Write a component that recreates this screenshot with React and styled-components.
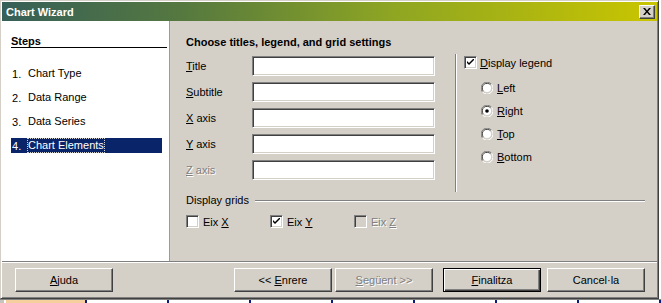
import React from "react";
import styled, { createGlobalStyle, css } from "styled-components";

const GlobalStyle = createGlobalStyle`
  html, body {
    margin: 0;
    padding: 0;
    background: #ffffff;
    overflow: hidden;
  }
  body {
    font-family: "Liberation Sans", Arial, sans-serif;
    font-size: 11px;
    color: #000;
  }
`;

const steps = ["Chart Type", "Data Range", "Data Series", "Chart Elements"];

const fields = [
  { key: "T", rest: "itle" },
  { key: "S", rest: "ubtitle" },
  { key: "X", rest: " axis" },
  { key: "Y", rest: " axis" },
  { key: "Z", rest: " axis", disabled: true },
];

const positions = [
  { key: "L", rest: "eft" },
  { key: "R", rest: "ight", checked: true },
  { key: "T", rest: "op" },
  { key: "B", rest: "ottom" },
];

const grids = [
  { label: "X" },
  { label: "Y", checked: true },
  { label: "Z", disabled: true },
];

const CheckMark = () => (
  <svg width="7" height="7" viewBox="0 0 7 7">
    <path d="M0 2 L0 4 L2 6 L7 1 L7 -1 L2 4 Z" fill="#000" />
  </svg>
);

const CloseGlyph = () => (
  <svg width="8" height="7" viewBox="0 0 8 7">
    <path d="M0 0 H2 L4 2.5 L6 0 H8 L5 3.5 L8 7 H6 L4 4.5 L2 7 H0 L3 3.5 Z" fill="#000" />
  </svg>
);

const RadioIcon = ({ checked }) => (
  <svg width="12" height="12" viewBox="0 0 12 12">
    <path d="M10.5 2.2 A5.5 5.5 0 0 0 1.5 10" stroke="#808080" fill="none" />
    <path d="M9.6 3 A4.4 4.4 0 0 0 2.4 9.2" stroke="#404040" fill="none" />
    <path d="M1.5 10 A5.5 5.5 0 0 0 10.5 2.2" stroke="#ffffff" fill="none" />
    <path d="M2.4 9.2 A4.4 4.4 0 0 0 9.6 3" stroke="#d4d0c8" fill="none" />
    <circle cx="6" cy="6" r="4" fill="#ffffff" />
    {checked && <circle cx="6" cy="6" r="1.8" fill="#000" />}
  </svg>
);

const Mnemonic = ({ k, rest, before }) => (
  <span>
    {before}
    <U>{k}</U>
    {rest}
  </span>
);

export default function App() {
  return (
    <>
      <GlobalStyle />
      <Window>
        <TitleBar>
          <TitleText>Chart Wizard</TitleText>
          <CloseButton>
            <CloseGlyph />
          </CloseButton>
        </TitleBar>
        <Body>
          <StepsPanel>
            <StepsHeading>Steps</StepsHeading>
            <StepList>
              {steps.map((s, i) => (
                <StepItem key={s} $active={i === 3}>
                  <StepNum>{i + 1}.</StepNum>
                  <StepLabel $active={i === 3}>{s}</StepLabel>
                </StepItem>
              ))}
            </StepList>
          </StepsPanel>
          <Main>
            <MainHeading>Choose titles, legend, and grid settings</MainHeading>
            <Columns>
              <FormColumn>
                {fields.map((f) => (
                  <FieldRow key={f.key}>
                    <FieldLabel $disabled={f.disabled}>
                      <Mnemonic k={f.key} rest={f.rest} />
                    </FieldLabel>
                    <TextBox />
                  </FieldRow>
                ))}
              </FormColumn>
              <VSeparator />
              <LegendColumn>
                <CheckRow>
                  <CheckBox>
                    <CheckMark />
                  </CheckBox>
                  <CheckText>
                    <Mnemonic k="D" rest="isplay legend" />
                  </CheckText>
                </CheckRow>
                <RadioList>
                  {positions.map((p) => (
                    <RadioRow key={p.key}>
                      <RadioIcon checked={p.checked} />
                      <Mnemonic k={p.key} rest={p.rest} />
                    </RadioRow>
                  ))}
                </RadioList>
              </LegendColumn>
            </Columns>
            <GroupTitle>
              <span>Display grids</span>
              <GroupLine />
            </GroupTitle>
            <GridRow>
              {grids.map((g) => (
                <GridItem key={g.label}>
                  <CheckBox $disabled={g.disabled}>{g.checked && <CheckMark />}</CheckBox>
                  <CheckText $disabled={g.disabled}>
                    Eix <U>{g.label}</U>
                  </CheckText>
                </GridItem>
              ))}
            </GridRow>
          </Main>
        </Body>
        <HSeparator />
        <ButtonBar>
          <Button>
            <Mnemonic k="A" rest="juda" />
          </Button>
          <Spacer />
          <Button>
            <Mnemonic before="<< " k="E" rest="nrere" />
          </Button>
          <Button $disabled $gap={3}>
            <Mnemonic k="S" rest="egüent >>" />
          </Button>
          <Button $default $gap={10}>
            <Mnemonic k="F" rest="inalitza" />
          </Button>
          <Button $gap={6}>
            <span>Cancel·la</span>
          </Button>
        </ButtonBar>
      </Window>
      <SheetRow>
        <RowHeader />
        <SheetCell $first />
        {Array.from({ length: 7 }).map((_, i) => (
          <SheetCell key={i} />
        ))}
      </SheetRow>
    </>
  );
}

const Window = styled.div`
  width: 659px;
  height: 299px;
  box-sizing: border-box;
  background: #d4d0c8;
  border: 1px solid;
  border-color: #d4d0c8 #404040 #404040 #d4d0c8;
  box-shadow: inset 1px 1px #ffffff, inset -1px -1px #808080;
  padding: 1px;
  display: flex;
  flex-direction: column;
`;

const TitleBar = styled.div`
  height: 19px;
  flex: none;
  display: flex;
  align-items: center;
  justify-content: space-between;
  padding: 0 2px 0 4px;
  background: linear-gradient(90deg, #365f58 0%, #56793f 28%, #8fa622 60%, #c9c500 100%);
`;

const TitleText = styled.span`
  color: #ffffff;
  font-weight: bold;
  font-size: 11px;
  font-family: "Liberation Sans", Arial, sans-serif;
`;

const CloseButton = styled.div`
  width: 16px;
  height: 14px;
  box-sizing: border-box;
  background: #d4d0c8;
  border: 1px solid;
  border-color: #ffffff #404040 #404040 #ffffff;
  box-shadow: inset -1px -1px #808080;
  display: flex;
  align-items: center;
  justify-content: center;
  padding-bottom: 1px;
`;

const Body = styled.div`
  height: 240px;
  flex: none;
  display: flex;
`;

const StepsPanel = styled.div`
  width: 168px;
  flex: none;
  background: #ffffff;
  border-right: 1px solid #a09c94;
  padding-top: 14px;
  box-sizing: border-box;
`;

const StepsHeading = styled.div`
  margin: 0 2px 0 9px;
  font-weight: bold;
  line-height: 12px;
  border-bottom: 1px solid #000;
`;

const StepList = styled.div`
  margin-top: 18px;
  display: flex;
  flex-direction: column;
  gap: 9px;
`;

const StepItem = styled.div`
  height: 15px;
  margin: 0 7px 0 9px;
  display: flex;
  align-items: center;
  ${(p) =>
    p.$active &&
    css`
      background: #0a246a;
      color: #ffffff;
    `}
`;

const StepNum = styled.span`
  width: 16px;
  padding-left: 1px;
`;

const StepLabel = styled.span`
  line-height: 13px;
  ${(p) =>
    p.$active &&
    css`
      outline: 1px dotted #d0d0d0;
    `}
`;

const Main = styled.div`
  flex: 1;
  padding: 15px 12px 0 16px;
  display: flex;
  flex-direction: column;
`;

const MainHeading = styled.div`
  font-weight: bold;
  line-height: 13px;
`;

const Columns = styled.div`
  margin-top: 5px;
  display: flex;
  height: 138px;
`;

const FormColumn = styled.div`
  padding-top: 2px;
  display: flex;
  flex-direction: column;
  gap: 6px;
`;

const FieldRow = styled.div`
  display: flex;
  align-items: center;
`;

const FieldLabel = styled.span`
  width: 66px;
  ${(p) =>
    p.$disabled &&
    css`
      color: #808080;
      text-shadow: 1px 1px #ffffff;
    `}
`;

const TextBox = styled.div`
  width: 183px;
  height: 20px;
  box-sizing: border-box;
  background: #ffffff;
  border: 1px solid;
  border-color: #808080 #ffffff #ffffff #808080;
  box-shadow: inset 1px 1px #404040, inset -1px -1px #d4d0c8;
`;

const VSeparator = styled.div`
  margin-left: 20px;
  width: 0;
  border-left: 1px solid #808080;
  border-right: 1px solid #ffffff;
`;

const LegendColumn = styled.div`
  padding: 2px 0 0 7px;
  display: flex;
  flex-direction: column;
`;

const CheckRow = styled.div`
  display: flex;
  align-items: center;
  gap: 3px;
`;

const CheckBox = styled.span`
  width: 13px;
  height: 13px;
  box-sizing: border-box;
  flex: none;
  background: ${(p) => (p.$disabled ? "#d4d0c8" : "#ffffff")};
  border: 1px solid;
  border-color: #808080 #ffffff #ffffff #808080;
  box-shadow: inset 1px 1px #404040, inset -1px -1px #d4d0c8;
  display: flex;
  align-items: center;
  justify-content: center;
`;

const CheckText = styled.span`
  ${(p) =>
    p.$disabled &&
    css`
      color: #808080;
      text-shadow: 1px 1px #ffffff;
    `}
`;

const RadioList = styled.div`
  margin: 12px 0 0 17px;
  display: flex;
  flex-direction: column;
  gap: 10px;
`;

const RadioRow = styled.label`
  display: flex;
  align-items: center;
  gap: 4px;
  height: 13px;
`;

const GroupTitle = styled.div`
  margin-top: 2px;
  display: flex;
  align-items: center;
  gap: 6px;
  line-height: 13px;
`;

const GroupLine = styled.div`
  flex: 1;
  border-top: 1px solid #808080;
  border-bottom: 1px solid #ffffff;
`;

const GridRow = styled.div`
  margin-top: 8px;
  display: flex;
`;

const GridItem = styled.div`
  width: 84px;
  display: flex;
  align-items: center;
  gap: 4px;
`;

const U = styled.span`
  text-decoration: underline;
`;

const HSeparator = styled.div`
  flex: none;
  border-top: 1px solid #808080;
  border-bottom: 1px solid #ffffff;
`;

const ButtonBar = styled.div`
  flex: 1;
  display: flex;
  align-items: flex-start;
  padding: 5px 12px 0 13px;
`;

const Spacer = styled.div`
  flex: 1;
`;

const Button = styled.div`
  width: 98px;
  height: 24px;
  box-sizing: border-box;
  margin-left: ${(p) => p.$gap || 0}px;
  display: flex;
  align-items: center;
  justify-content: center;
  white-space: pre;
  background: #d4d0c8;
  border: 1px solid;
  border-color: #ffffff #404040 #404040 #ffffff;
  box-shadow: inset -1px -1px #808080;
  ${(p) =>
    p.$disabled &&
    css`
      color: #808080;
      text-shadow: 1px 1px #ffffff;
    `}
  ${(p) =>
    p.$default &&
    css`
      border: 1px solid #000;
      box-shadow: inset 1px 1px #ffffff, inset -1px -1px #404040, inset -2px -2px #808080;
    `}
`;

const SheetRow = styled.div`
  display: flex;
  height: 20px;
  border-top: 1px solid #808080;
`;

const RowHeader = styled.div`
  width: 33px;
  margin-right: 2px;
  background: #c8c4bc;
`;

const SheetCell = styled.div`
  width: ${(p) => (p.$first ? 79 : 80)}px;
  flex: none;
  background: ${(p) => (p.$first ? "#f6cf9f" : "#ffffff")};
  border-right: 2px solid #0a1a80;
`;
